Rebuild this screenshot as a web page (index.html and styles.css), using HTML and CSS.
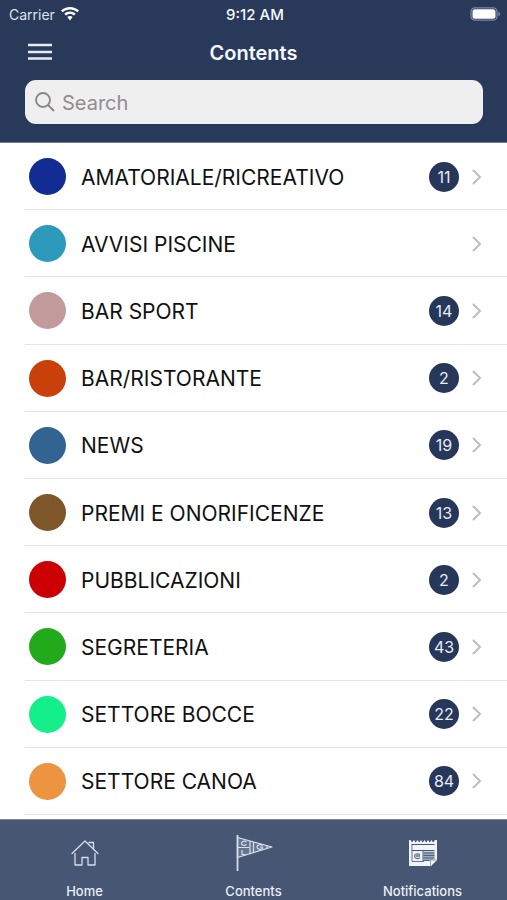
FILE: index.html
```html
<!DOCTYPE html>
<html lang="en">
<head>
<meta charset="utf-8">
<meta name="viewport" content="width=device-width, initial-scale=1">
<title>Contents</title>
<link rel="stylesheet" href="styles.css">
</head>
<body>
<header class="header">
  <div class="status">
    <div class="status-left">
      <span>Carrier</span>
      <svg class="wifi" viewBox="0 0 18 14" aria-hidden="true"><path d="M9 0C5.600 0 2.500 1.300 0 3.500L1.700 5.300C3.700 3.500 6.200 2.500 9 2.500s5.300 1 7.300 2.800L18 3.500C15.500 1.300 12.400 0 9 0Z"/><path d="M9 4.600c-2.200 0-4.200.8-5.700 2.200L5 8.600c1.100-1 2.500-1.600 4-1.600s2.900.6 4 1.600l1.700-1.800C13.200 5.400 11.200 4.600 9 4.600Z"/><path d="M9 9c-1 0-1.900.4-2.600 1L9 13.500 11.600 10C10.900 9.400 10 9 9 9Z"/></svg>
    </div>
    <span class="time">9:12 AM</span>
    <div class="status-right">
      <svg class="battery" viewBox="0 0 31 14" aria-hidden="true"><rect x="1" y=".8" width="26" height="12.400" rx="4" fill="none" stroke="#7c89a3" stroke-width="1.300"/><rect x="2.500" y="2.300" width="23" height="9.400" rx="2.500" fill="#fff"/><path d="M28.500 5c2 .6 2 3.400 0 4Z" fill="#8a95ac"/></svg>
    </div>
  </div>
  <div class="titlebar">
    <button class="menu" type="button" aria-label="Menu"><svg viewBox="0 0 24 18" aria-hidden="true"><path d="M0 2h24M0 9h24M0 15.500h24" stroke="#e4ebf4" stroke-width="2.600"/></svg></button>
    <h1>Contents</h1>
  </div>
  <label class="search">
    <svg viewBox="0 0 20 20" aria-hidden="true"><circle cx="8" cy="8" r="7" /><path d="M13 13l6 6"/></svg>
    <input type="search" placeholder="Search" aria-label="Search">
  </label>
</header>
<main class="content">
  <ul class="list">
    <li><a href="#"><span class="dot blue"></span><span class="name">AMATORIALE/RICREATIVO</span><span class="badge">11</span><svg class="chevron" viewBox="0 0 10 16"><path d="M1 1l7 7-7 7"/></svg></a></li>
    <li><a href="#"><span class="dot teal"></span><span class="name">AVVISI PISCINE</span><svg class="chevron" viewBox="0 0 10 16"><path d="M1 1l7 7-7 7"/></svg></a></li>
    <li><a href="#"><span class="dot rose"></span><span class="name">BAR SPORT</span><span class="badge">14</span><svg class="chevron" viewBox="0 0 10 16"><path d="M1 1l7 7-7 7"/></svg></a></li>
    <li><a href="#"><span class="dot rust"></span><span class="name">BAR/RISTORANTE</span><span class="badge">2</span><svg class="chevron" viewBox="0 0 10 16"><path d="M1 1l7 7-7 7"/></svg></a></li>
    <li><a href="#"><span class="dot steel"></span><span class="name">NEWS</span><span class="badge">19</span><svg class="chevron" viewBox="0 0 10 16"><path d="M1 1l7 7-7 7"/></svg></a></li>
    <li><a href="#"><span class="dot brown"></span><span class="name">PREMI E ONORIFICENZE</span><span class="badge">13</span><svg class="chevron" viewBox="0 0 10 16"><path d="M1 1l7 7-7 7"/></svg></a></li>
    <li><a href="#"><span class="dot red"></span><span class="name">PUBBLICAZIONI</span><span class="badge">2</span><svg class="chevron" viewBox="0 0 10 16"><path d="M1 1l7 7-7 7"/></svg></a></li>
    <li><a href="#"><span class="dot green"></span><span class="name">SEGRETERIA</span><span class="badge">43</span><svg class="chevron" viewBox="0 0 10 16"><path d="M1 1l7 7-7 7"/></svg></a></li>
    <li><a href="#"><span class="dot mint"></span><span class="name">SETTORE BOCCE</span><span class="badge">22</span><svg class="chevron" viewBox="0 0 10 16"><path d="M1 1l7 7-7 7"/></svg></a></li>
    <li><a href="#"><span class="dot orange"></span><span class="name">SETTORE CANOA</span><span class="badge">84</span><svg class="chevron" viewBox="0 0 10 16"><path d="M1 1l7 7-7 7"/></svg></a></li>
  </ul>
</main>
<nav class="tabs">
  <a href="#">
    <svg viewBox="0 0 40 40" aria-hidden="true"><g fill="none" stroke="#d5deeb" stroke-width="1.300" stroke-linejoin="round" stroke-linecap="round"><path d="M7 20.500 20 8l13 12.500"/><path d="M24 9.500h4.500V15.500"/><path d="M10 20.500V32h7v-7.500h6V32h7V20.500"/></g></svg>
    <span>Home</span>
  </a>
  <a href="#">
    <svg viewBox="0 0 40 40" aria-hidden="true"><path d="M3.500 4.500 38 14 3.500 24.500Z" fill="#66758f"/><path d="M3.500 2v36" stroke="#d5deeb" stroke-width="1.800"/><g fill="none" stroke="#d5deeb" stroke-width="1.200" stroke-linejoin="round"><path d="M3.500 4.500 38 14 3.500 24.500Z"/><path d="M4 14.500h11M16 8v13M19.500 9v11"/><path d="M12.500 9c-2-1.500-5-.8-5 1.300s3 2.600 5 1.200M8 17v4.500h4"/><path d="M28.500 12.500c-2-1.500-5.500-.8-5.500 1.500s3.500 3 5.500 1.500v-1.500h-2.500M33 12.700v2.600"/></g></svg>
    <span>Contents</span>
  </a>
  <a href="#">
    <svg viewBox="0 0 40 40" aria-hidden="true"><path d="M6 7h1.500l1.500 2.500 2-2.500 1.600 2.500L14.500 7l1.600 2.500L18 7l1.700 2.500L21.500 7l1.700 2.500L25 7l1.700 2.500L28.500 7l1.600 2.500L32 7h2v20l-6 6H6Z" fill="#f0f5fb"/><path d="M8.500 11.500h23M8.500 17.500h23" stroke="#475672" stroke-width="1.200"/><path d="M9 11.500v17h12" fill="none" stroke="#66758f"/><path d="M20.500 18.500h11v7.500l-5 2h-6Z" fill="#9aa7bc"/><path d="M20 18v10M20.500 20h11M20.500 22.500h11M20.500 25h11M20.500 27.500h6" stroke="#526180"/><path d="M17 21.700c-1.800-1.400-5.500-.8-5.500 1.500s3.500 3.200 5.500 1.600M13 23h4" fill="none" stroke="#66758f" stroke-width="1.300"/><path d="M27.500 32.500V27h6" fill="#f0f5fb" stroke="#8d9bb2"/></svg>
    <span>Notifications</span>
  </a>
</nav>
</body>
</html>
```
FILE: styles.css
```css
* {
  box-sizing: border-box;
}

body {
  margin: 0;
  min-height: 100vh;
  display: flex;
  flex-direction: column;
  background: #fff;
  color: #111;
  font-family: Inter, "Liberation Sans", sans-serif;
}

a {
  color: inherit;
  text-decoration: none;
}

.header {
  background: #29395a;
  color: #f5f8fc;
  padding-bottom: 18px;
  border-bottom: 1px solid #747f95;
}

.status {
  display: grid;
  grid-template-columns: 1fr auto 1fr;
  align-items: center;
  height: 28px;
  padding: 0 6px 0 9px;
  font-size: 14px;
}

.status-left {
  display: flex;
  align-items: center;
  gap: 6px;
  color: #dce3ed;
}

.wifi {
  width: 18px;
  height: 14px;
  fill: #fff;
}

.time {
  font-size: 15px;
  font-weight: 500;
}

.status-right {
  display: flex;
  justify-content: flex-end;
}

.battery {
  width: 31px;
  height: 14px;
}

.titlebar {
  display: grid;
  grid-template-columns: 24px 1fr 24px;
  align-items: center;
  height: 48px;
  padding: 0 28px;
}

.menu {
  display: flex;
  padding: 0;
  border: 0;
  background: none;
}

.menu svg {
  width: 24px;
  height: 18px;
}

h1 {
  margin: 0;
  padding-top: 1px;
  text-align: center;
  font-size: 20px;
  line-height: 24px;
  font-weight: 600;
}

.search {
  display: flex;
  align-items: center;
  gap: 7px;
  height: 44px;
  margin: 4px 24px 0 25px;
  padding: 0 10px;
  border-radius: 11px;
  background: #efefef;
}

.search svg {
  flex: none;
  width: 20px;
  height: 20px;
  fill: none;
  stroke: #868689;
  stroke-width: 1.8;
}

.search input {
  flex: 1;
  min-width: 0;
  padding: 2px 0 0;
  border: 0;
  outline: 0;
  background: none;
  color: #111;
  font: 20px/24px Inter, "Liberation Sans", sans-serif;
}

.search input::placeholder {
  color: #8e8e91;
}

.content {
  flex: 1;
  display: flex;
  padding: 0 0 4px 25px;
}

.list {
  flex: 1;
  display: grid;
  grid-auto-rows: 1fr;
  margin: 0;
  padding: 0;
  list-style: none;
}

.list li {
  display: flex;
  border-bottom: 1px solid #e4e4e4;
}

.list a {
  flex: 1;
  display: flex;
  align-items: center;
  padding: 1px 25px 0 4px;
}

.dot {
  width: 37px;
  height: 37px;
  margin-right: 15px;
  border-radius: 50%;
}

.blue { background: #132c92; }
.teal { background: #2d9abb; }
.rose { background: #c19b9c; }
.rust { background: #ca400b; }
.steel { background: #326391; }
.brown { background: #7d562a; }
.red { background: #cc0003; }
.green { background: #23aa1c; }
.mint { background: #14ef89; }
.orange { background: #ec943f; }

.name {
  flex: 1;
  padding-top: 2px;
  font-size: 21px;
  line-height: 28px;
}

.badge {
  width: 30px;
  height: 30px;
  margin-right: 13px;
  border-radius: 50%;
  background: #263759;
  color: #e6edf7;
  font-size: 16px;
  line-height: 30px;
  text-align: center;
}

.chevron {
  width: 10px;
  height: 16px;
  fill: none;
  stroke: #bdbdbf;
  stroke-width: 2;
}

.tabs {
  display: grid;
  grid-template-columns: repeat(3, 1fr);
  height: 81px;
  background: #475672;
  border-top: 1px solid #7b879c;
  color: #e8eef7;
  font-size: 13px;
  line-height: 16px;
  font-weight: 500;
}

.tabs a {
  display: flex;
  flex-direction: column;
  align-items: center;
  justify-content: space-between;
  padding: 13px 0 1px;
}

.tabs svg {
  width: 40px;
  height: 40px;
}
```
